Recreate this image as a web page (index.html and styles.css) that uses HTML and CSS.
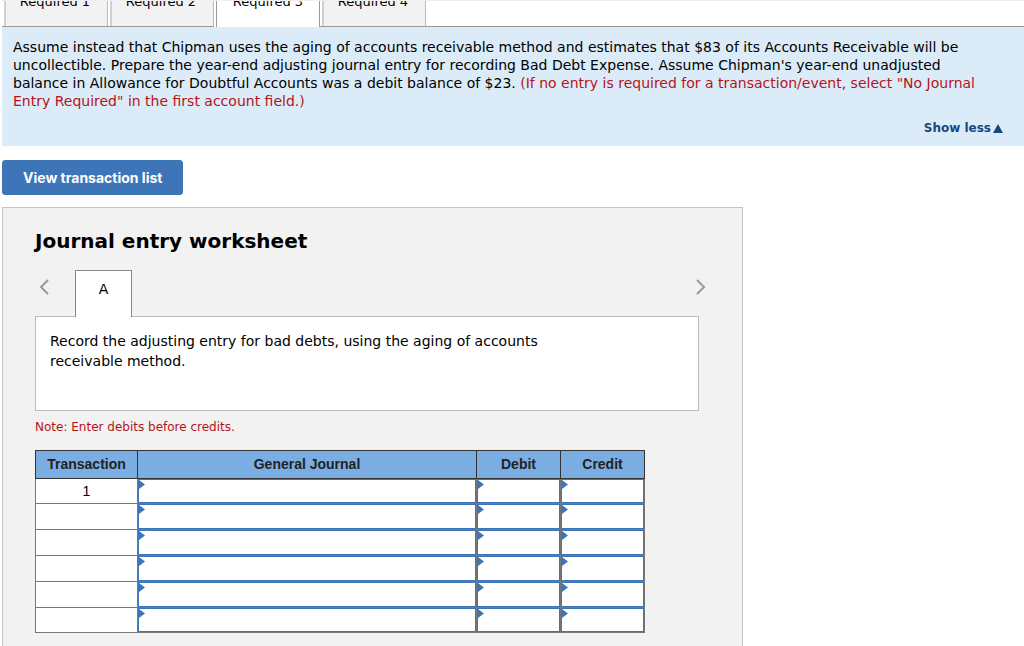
FILE: index.html
```html
<!DOCTYPE html>
<html lang="en">
<head>
<meta charset="utf-8">
<title>Journal entry worksheet</title>
<meta name="viewport" content="width=device-width, initial-scale=1">
<link rel="stylesheet" href="styles.css">
</head>
<body>
<nav class="steps" aria-label="Requirements">
  <button class="step" type="button">Required 1</button>
  <button class="step" type="button">Required 2</button>
  <button class="step step-active" type="button">Required 3</button>
  <button class="step" type="button">Required 4</button>
  <span class="steps-rest"></span>
</nav>
<section class="instructions">
  <p class="prompt">Assume instead that Chipman uses the aging of accounts receivable method and estimates that $83 of its Accounts Receivable will be uncollectible. Prepare the year-end adjusting journal entry for recording Bad Debt Expense. Assume Chipman's year-end unadjusted<br>balance in Allowance for Doubtful Accounts was a debit balance of $23. <span class="hint">(If no entry is required for a transaction/event, select "No Journal<br>Entry Required" in the first account field.)</span></p>
  <a class="toggle" href="#">Show less<svg class="toggle-icon" viewBox="0 0 10 9" aria-hidden="true"><path d="M5 0 10 9H0Z"/></svg></a>
</section>
<button class="view-list" type="button">View transaction list</button>
<main class="worksheet">
  <h1 class="title">Journal entry worksheet</h1>
  <div class="entry-nav">
    <button class="arrow" type="button" aria-label="Previous entry"><svg class="arrow-icon" viewBox="0 0 10 16" aria-hidden="true"><path d="M9 1 2 8l7 7"/></svg></button>
    <button class="entry-tab" type="button">A</button>
    <button class="arrow arrow-next" type="button" aria-label="Next entry"><svg class="arrow-icon" viewBox="0 0 10 16" aria-hidden="true"><path d="M1 1 8 8l-7 7"/></svg></button>
  </div>
  <div class="description"><p class="description-text">Record the adjusting entry for bad debts, using the aging of accounts receivable method.</p></div>
  <p class="note">Note: Enter debits before credits.</p>
  <table class="journal">
    <colgroup><col class="col-transaction"><col class="col-journal"><col class="col-amount"><col class="col-amount"></colgroup>
    <thead>
      <tr><th scope="col">Transaction</th><th scope="col">General Journal</th><th scope="col">Debit</th><th scope="col">Credit</th></tr>
    </thead>
    <tbody>
      <tr><td class="number">1</td><td class="field"><input class="cell" type="text" aria-label="Account, line 1"></td><td class="field"><input class="cell" type="text" aria-label="Debit, line 1"></td><td class="field"><input class="cell" type="text" aria-label="Credit, line 1"></td></tr>
      <tr><td class="number"></td><td class="field"><input class="cell" type="text" aria-label="Account, line 2"></td><td class="field"><input class="cell" type="text" aria-label="Debit, line 2"></td><td class="field"><input class="cell" type="text" aria-label="Credit, line 2"></td></tr>
      <tr><td class="number"></td><td class="field"><input class="cell" type="text" aria-label="Account, line 3"></td><td class="field"><input class="cell" type="text" aria-label="Debit, line 3"></td><td class="field"><input class="cell" type="text" aria-label="Credit, line 3"></td></tr>
      <tr><td class="number"></td><td class="field"><input class="cell" type="text" aria-label="Account, line 4"></td><td class="field"><input class="cell" type="text" aria-label="Debit, line 4"></td><td class="field"><input class="cell" type="text" aria-label="Credit, line 4"></td></tr>
      <tr><td class="number"></td><td class="field"><input class="cell" type="text" aria-label="Account, line 5"></td><td class="field"><input class="cell" type="text" aria-label="Debit, line 5"></td><td class="field"><input class="cell" type="text" aria-label="Credit, line 5"></td></tr>
      <tr><td class="number"></td><td class="field"><input class="cell" type="text" aria-label="Account, line 6"></td><td class="field"><input class="cell" type="text" aria-label="Debit, line 6"></td><td class="field"><input class="cell" type="text" aria-label="Credit, line 6"></td></tr>
    </tbody>
  </table>
</main>
</body>
</html>
```
FILE: styles.css
```css
* {
  box-sizing: border-box;
}

body {
  display: flex;
  flex-direction: column;
  align-items: flex-start;
  min-height: 100vh;
  margin: 0;
  padding-left: 2px;
  background: #fff;
  color: #000;
  font: 14px/18px Verdana, "DejaVu Sans", sans-serif;
}

button {
  margin: 0;
  font: inherit;
  color: inherit;
  cursor: pointer;
}

p {
  margin: 0;
}

/* Requirement tabs, scrolled partly out of view */
.steps {
  display: flex;
  align-items: flex-end;
  align-self: stretch;
  height: 27px;
  overflow: hidden;
  border-top: 1px solid #eee;
}

.step {
  flex: none;
  width: 106px;
  height: 44px;
  padding: 0 0 5px;
  border: solid;
  border-width: 0 0 1px;
  border-color: #999;
  background: linear-gradient(90deg, #fff 2px, #d0d0d0 2px 4px, #f2f2f2 4px 105px, #bbb 105px 106px);
  font-size: 13px;
}

.step-active {
  width: 104px;
  margin-left: 2px;
  padding-bottom: 6px;
  border: 1px solid #999;
  border-width: 0 1px;
  background: #fff;
}

.steps-rest {
  flex: 1;
  border-bottom: 1px solid #999;
}

.instructions {
  display: flex;
  flex-direction: column;
  align-self: stretch;
  padding: 11px 2px 9px 11px;
  background: #dbecf8;
}

.hint,
.note {
  color: #b5121b;
}

.toggle {
  display: flex;
  align-items: center;
  align-self: flex-end;
  gap: 2px;
  margin: 9px 19px 0 0;
  color: #1a4780;
  font-size: 12px;
  font-weight: bold;
  text-decoration: none;
}

.toggle-icon {
  width: 10px;
  height: 9px;
  fill: #1a4780;
}

.view-list {
  margin: 14px 0 12px;
  padding: 8px 20px 7px;
  border: 1px solid #3d75b8;
  border-radius: 3px;
  background: #3d75b8;
  color: #fff;
  font: bold 14px/18px Inter, sans-serif;
}

.worksheet {
  flex: 1;
  width: 100%;
  max-width: 741px;
  padding: 23px 43px 13px 32px;
  border: solid #c4c4c4;
  border-width: 1px 1px 0;
  background: #f2f2f2;
}

.title {
  margin: 0 0 18px;
  font-size: 20px;
  line-height: 21px;
}

.entry-nav {
  display: flex;
  align-items: flex-start;
  position: relative;
  margin-bottom: -1px;
}

.arrow {
  width: 40px;
  height: 34px;
  padding: 0 0 0 4px;
  border: 0;
  background: none;
  text-align: left;
}

.arrow-next {
  width: 16px;
  margin-left: auto;
  margin-right: -13px;
  padding: 0;
}

.arrow-icon {
  display: block;
  width: 10px;
  height: 16px;
  fill: none;
  stroke: #999;
  stroke-width: 2;
}

.entry-tab {
  width: 57px;
  height: 47px;
  padding: 0 0 10px;
  border: 1px solid #888;
  border-bottom: 0;
  background: #fff;
}

.description {
  min-height: 95px;
  padding: 14px;
  border: 1px solid #bbb;
  background: #fff;
}

.description-text {
  max-width: 560px;
  line-height: 20px;
}

.note {
  margin: 7px 0 14px;
  font-size: 12px;
}

.journal {
  width: 100%;
  max-width: 610px;
  table-layout: fixed;
  border-collapse: collapse;
  font-family: Arial, "Liberation Sans", sans-serif;
}

.col-transaction {
  width: 102px;
}

.col-amount {
  width: 84px;
}

.journal th {
  height: 28px;
  padding: 0 0 1px;
  border: 1px solid #333;
  background: #7aade2;
  color: #222;
}

.journal td {
  height: 26px;
  padding: 0;
  border: 1px solid #777;
  background: #fff;
}

.journal tbody tr:first-child td,
.journal tbody tr:last-child td {
  height: 25px;
}

.number {
  text-align: center;
}

.field {
  position: relative;
}

.cell {
  display: block;
  width: 100%;
  height: 25px;
  padding: 0 8px;
  border: 1px solid #3d75b8;
  border-radius: 0;
  background: #fff;
  font: inherit;
}

.journal tbody tr:first-child .cell,
.journal tbody tr:last-child .cell {
  height: 24px;
}

.field::before {
  content: "";
  position: absolute;
  top: 1px;
  left: 1px;
  width: 6px;
  height: 9px;
  background: #3d75b8;
  clip-path: polygon(0 0, 100% 50%, 0 100%);
}
```
